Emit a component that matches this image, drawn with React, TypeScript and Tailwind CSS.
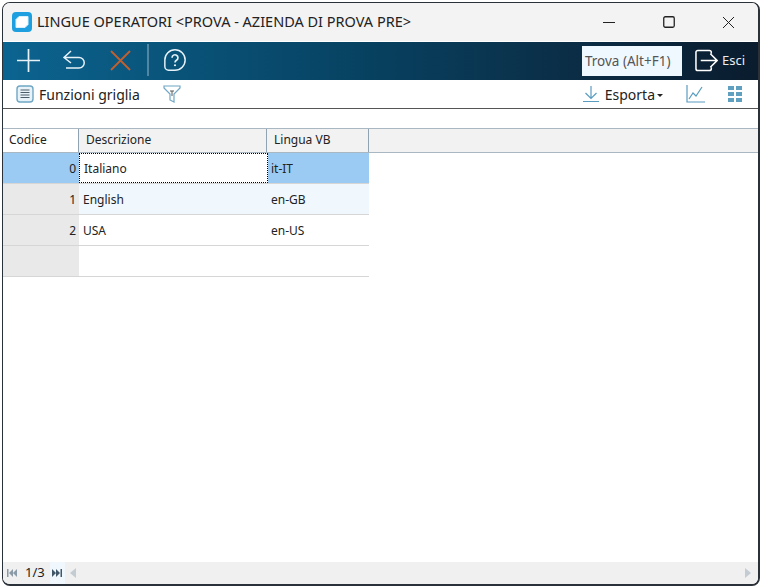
const uiFont = "font-['Noto_Sans','Open_Sans',sans-serif]";

function AppLogo() {
  return (
    <svg width="20" height="20" viewBox="0 0 20 20">
      <rect x="0" y="0" width="20" height="20" rx="4" fill="#1e9fe0" />
      <path d="M7 4.500h9v8L13 15.500H4v-8z" fill="#fff" stroke="#d8f0fb" strokeWidth="1" strokeLinejoin="round" />
    </svg>
  );
}

function WindowButtons() {
  return (
    <div className="flex items-center text-[#222]">
      <svg width="14" height="14" viewBox="0 0 14 14" className="mr-[47px]">
        <path d="M1 7.500h12" stroke="currentColor" strokeWidth="1" />
      </svg>
      <svg width="12" height="12" viewBox="0 0 12 12" className="mr-[47px]">
        <rect x="0.75" y="0.75" width="10.5" height="10.5" rx="1.5" fill="none" stroke="currentColor" strokeWidth="1.3" />
      </svg>
      <svg width="13" height="13" viewBox="0 0 13 13" className="mr-[23px]">
        <path d="M1 1l11 11M12 1L1 12" stroke="currentColor" strokeWidth="1" />
      </svg>
    </div>
  );
}

function MainToolbar() {
  return (
    <div className="flex h-[38px] items-center bg-gradient-to-r from-[#0b6490] via-[#07405f] via-50% to-[#0a1c2e]">
      <svg width="23" height="23" viewBox="0 0 24 24" className="ml-[14px] -mt-[2px]">
        <path d="M12 0v24M0 12h24" stroke="#e6f2f8" strokeWidth="1.800" />
      </svg>
      <svg width="24" height="20" viewBox="0 0 24 20" className="ml-[22px] -mt-[2px]">
        <path d="M9 1L2 7.500 9 13M2 7.500h15a5 5 0 0 1 0 10.500H4" fill="none" stroke="#e6f2f8" strokeWidth="1.500" />
      </svg>
      <svg width="21" height="21" viewBox="0 0 21 21" className="ml-[24px] -mt-[2px]">
        <path d="M1 1l19 19M20 1L1 20" stroke="#c2602f" strokeWidth="1.800" />
      </svg>
      <div className="ml-[16px] h-[32px] w-[2px] -mt-[2px] bg-[#4f86a3]" />
      <svg width="24" height="24" viewBox="0 0 26 26" className="ml-[14px] -mt-[2px]">
        <path d="M13 2a11 11 0 1 1 0 22H6a4 4 0 0 1-4-4v-7A11 11 0 0 1 13 2z" fill="none" stroke="#e6f2f8" strokeWidth="1.600" />
        <path d="M9.800 10.500a3.200 3.200 0 1 1 4.800 2.800c-1 .6-1.600 1.200-1.600 2.400" fill="none" stroke="#e6f2f8" strokeWidth="1.800" />
        <circle cx="13" cy="18.700" r="1.200" fill="#e6f2f8" />
      </svg>
      <div className="ml-auto mr-[13px] flex h-[30px] w-[100px] items-center bg-[#f0f8ff] pl-[3px] text-[13.500px] text-[#555]">
        Trova (Alt+F1)
      </div>
      <svg width="23" height="23" viewBox="0 0 24 24" className="-mt-[2px]">
        <path d="M17 5V3.500A2 2 0 0 0 15 1.500H3A2 2 0 0 0 1 3.500v17a2 2 0 0 0 2 2h12a2 2 0 0 0 2-2V19" fill="none" stroke="#fff" strokeWidth="1.600" />
        <path d="M6 12h16M16 5l7 7-7 7" fill="none" stroke="#fff" strokeWidth="1.600" />
      </svg>
      <span className="ml-[4px] mr-[13px] text-[13px] text-[#e8eef2]">Esci</span>
    </div>
  );
}

function SecondToolbar() {
  return (
    <div className="flex h-[29px] items-center border-b border-[#555] text-[14px] text-[#222]">
      <svg width="18" height="18" viewBox="0 0 18 18" className="ml-[13px]">
        <rect x="1" y="1" width="16" height="16" rx="3" fill="#e8f3f9" stroke="#6fa6c4" strokeWidth="1.400" />
        <path d="M4.500 5h9M4.500 7.500h9M4.500 10h9M4.500 12.500h9" stroke="#4b5d68" strokeWidth="1" />
      </svg>
      <span className="ml-[5px]">Funzioni griglia</span>
      <svg width="18" height="20" viewBox="0 0 18 20" className="ml-[23px] -mt-[1px]">
        <path d="M1 2h16v2l-6 6v8l-4-2v-6L1 4z" fill="none" stroke="#6fa6c4" strokeWidth="1.200" />
        <path d="M7 7h4M9 7v5" stroke="#555" strokeWidth="1" />
      </svg>
      <svg width="18" height="18" viewBox="0 0 18 18" className="ml-auto">
        <path d="M9 1v12M3.500 8l5.500 5.500L14.500 8M1 16.500h16" fill="none" stroke="#5a9cc0" strokeWidth="1.200" />
      </svg>
      <span className="ml-[5px]">Esporta</span>
      <span className="ml-[2px] mt-[2px] h-0 w-0 border-x-[3px] border-t-[3px] border-x-transparent border-t-[#222]" />
      <svg width="19" height="18" viewBox="0 0 19 18" className="ml-[23px]">
        <path d="M1 0v17h18" fill="none" stroke="#5a9cc0" strokeWidth="1.200" />
        <path d="M3 14l4-6 3 3 6-9" fill="none" stroke="#5a9cc0" strokeWidth="1.200" />
      </svg>
      <div className="ml-[23px] mr-[16px] grid grid-cols-2 gap-[2px]">
        {[0, 1, 2, 3, 4, 5].map((i) => (
          <div key={i} className="h-[4px] w-[6px] bg-[#5f9fbf]" />
        ))}
      </div>
    </div>
  );
}

function GridHeader() {
  return (
    <div className="flex h-[25px] border-y border-[#a9b7c2] bg-[#f2f2f2] text-[12px] text-[#222]">
      <div className="flex w-[75px] items-center bg-white pb-[2px] pl-[6px]">Codice</div>
      <div className="flex w-[188px] items-center border-l border-[#8fa3b3] pb-[2px] pl-[7px]">Descrizione</div>
      <div className="flex w-[103px] items-center border-x border-[#8fa3b3] pb-[2px] pl-[7px]">Lingua VB</div>
    </div>
  );
}

const rows = [
  { code: "0", desc: "Italiano", lang: "it-IT", bg: "bg-[#9bcbf3]", selected: true },
  { code: "1", desc: "English", lang: "en-GB", bg: "bg-[#f0f8fe]", selected: false },
  { code: "2", desc: "USA", lang: "en-US", bg: "bg-white", selected: false },
  { code: "", desc: "", lang: "", bg: "bg-white", selected: false },
];

function GridRows() {
  return (
    <div className="w-[366px] text-[12px] text-[#222]">
      {rows.map((r, i) => (
        <div key={i} className={`flex h-[31px] border-b border-[#d6d6d6] ${r.bg}`}>
          <div
            className={`flex w-[76px] items-center justify-end pr-[3px] pt-[2px] ${
              r.selected ? "bg-[#9bcbf3]" : "bg-[#e9e9e9]"
            }`}
          >
            {r.code}
          </div>
          <div
            className={`flex w-[189px] items-center pl-[4px] pt-[2px] ${
              r.selected ? "border border-dotted border-black bg-white pl-[3px]" : ""
            }`}
          >
            {r.desc}
          </div>
          <div className="flex flex-1 items-center pl-[3px] pt-[2px]">{r.lang}</div>
        </div>
      ))}
    </div>
  );
}

function StatusBar() {
  return (
    <div className="flex h-[22px] items-center bg-[#f0f0f0] text-[13px] text-[#222]">
      <svg width="10" height="8" viewBox="0 0 10 8" className="ml-[4px]">
        <path d="M0 0h1.500v8H0zM6 0v8L2 4zM10 0v8L6 4z" fill="#8a9aa6" />
      </svg>
      <span className="ml-[8px]">1/3</span>
      <div className="ml-[5px] flex h-full w-[15px] items-center justify-center bg-[#f0f8fe]">
        <svg width="10" height="8" viewBox="0 0 10 8">
          <path d="M0 0v8l4-4zM4 0v8l4-4zM8.500 0H10v8H8.500z" fill="#41586a" />
        </svg>
      </div>
      <span className="ml-[5px] h-0 w-0 border-y-[5px] border-r-[6px] border-y-transparent border-r-[#c3ccd3]" />
      <span className="ml-auto mr-[7px] h-0 w-0 border-y-[5px] border-l-[6px] border-y-transparent border-l-[#c3ccd3]" />
    </div>
  );
}

export default function App() {
  return (
    <div className={`h-[587px] w-[763px] bg-white pb-[1px] pl-[2px] pr-[3px] pt-[2px] ${uiFont}`}>
      <div className="flex h-full flex-col overflow-hidden rounded-[8px] border border-[#2b3138] border-r-2 border-b-2 bg-white">
        <div className="flex h-[38px] items-center bg-[#f3f3f3]">
          <div className="ml-[9px]">
            <AppLogo />
          </div>
          <span className="ml-[5px] text-[14.500px] text-[#222]">
            LINGUE OPERATORI &lt;PROVA - AZIENDA DI PROVA PRE&gt;
          </span>
          <div className="ml-auto">
            <WindowButtons />
          </div>
        </div>
        <div className="h-[1px] bg-white" />
        <MainToolbar />
        <SecondToolbar />
        <div className="h-[19px]" />
        <GridHeader />
        <GridRows />
        <div className="flex-1" />
        <StatusBar />
      </div>
    </div>
  );
}
